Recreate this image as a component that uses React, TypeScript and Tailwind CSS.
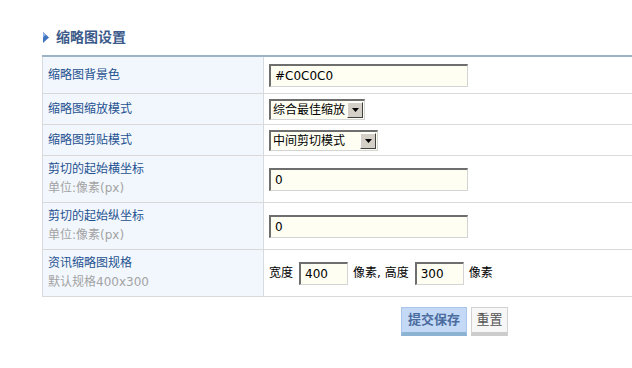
import React from "react";

const F = { fontFamily: '"DejaVu Sans", "Noto Sans CJK SC", sans-serif' };

function TextInput({ value, w }: { value: string; w: string }) {
  return (
    <div
      className={`${w} h-[23px] bg-[#fefef2] border-t-2 border-l-2 border-t-[#6e6e6e] border-l-[#6e6e6e] border-b border-r border-b-[#d4d4d4] border-r-[#d4d4d4] flex items-center pl-[4px] text-[12px] text-black leading-none`}
    >
      {value}
    </div>
  );
}

function Select({ value, w }: { value: string; w: string }) {
  return (
    <div
      className={`${w} h-[21px] bg-[#fefef2] border-t-2 border-l-2 border-t-[#6e6e6e] border-l-[#6e6e6e] border-b border-r border-b-[#d4d4d4] border-r-[#d4d4d4] flex items-center justify-between pl-[2px] pr-[1px] text-[12px] text-black leading-none`}
    >
      <span>{value}</span>
      <div className="w-[16px] h-[16px] bg-[#d4d0c8] border border-t-white border-l-white border-b-[#404040] border-r-[#404040] flex items-center justify-center">
        <svg width="7" height="4" viewBox="0 0 7 4">
          <polygon points="0,0 7,0 3.5,4" fill="#000" />
        </svg>
      </div>
    </div>
  );
}

function Row({
  h,
  label,
  sub,
  children,
}: {
  h: string;
  label: string;
  sub?: string;
  children: React.ReactNode;
}) {
  return (
    <div className={`flex ${h} border-b border-[#d9d9d9]`}>
      <div className="w-[222px] shrink-0 bg-[#f2f7fd] border-l border-r border-l-[#d6d9dd] border-r-[#d6dbe0] pl-[5px] flex flex-col justify-center text-[12px] leading-[19px]">
        <div className="text-[#1f5291]">{label}</div>
        {sub && <div className="text-[#a3a3a3]">{sub}</div>}
      </div>
      <div className="flex-1 pl-[5px] flex items-center">{children}</div>
    </div>
  );
}

export default function App() {
  return (
    <div className="w-[632px] h-[368px] bg-white overflow-hidden" style={F}>
      <div className="flex items-center h-[20px] mt-[27px] pl-[43px] gap-[7px]">
        <svg width="6" height="11" viewBox="0 0 6 11">
          <polygon points="0,0 6,5.5 0,11" fill="#3f73bf" />
          <polygon points="0,0 3,2.75 0,5.5" fill="#8fb2e6" />
        </svg>
        <span className="text-[14px] font-bold text-[#3b5a8a] leading-none">缩略图设置</span>
      </div>
      <div className="ml-[42px] mt-[8px] border-t-2 border-[#9cb4c6]">
        <Row h="h-[37px]" label="缩略图背景色">
          <TextInput value="#C0C0C0" w="w-[199px]" />
        </Row>
        <Row h="h-[31px]" label="缩略图缩放模式">
          <Select value="综合最佳缩放" w="w-[96px]" />
        </Row>
        <Row h="h-[31px]" label="缩略图剪贴模式">
          <Select value="中间剪切模式" w="w-[109px]" />
        </Row>
        <Row h="h-[47px]" label="剪切的起始横坐标" sub="单位:像素(px)">
          <TextInput value="0" w="w-[199px]" />
        </Row>
        <Row h="h-[47px]" label="剪切的起始纵坐标" sub="单位:像素(px)">
          <TextInput value="0" w="w-[199px]" />
        </Row>
        <Row h="h-[47px]" label="资讯缩略图规格" sub="默认规格400x300">
          <div className="flex items-center text-[12px] text-black">
            <span className="mr-[6px]">宽度</span>
            <TextInput value="400" w="w-[49px]" />
            <span className="ml-[5px] mr-[6px]">像素, 高度</span>
            <TextInput value="300" w="w-[49px]" />
            <span className="ml-[5px]">像素</span>
          </div>
        </Row>
      </div>
      <div className="flex gap-[4px] mt-[10px] pl-[401px]">
        <div className="w-[66px] h-[29px] bg-[#c3d9f6] border border-[#a9c6ea] border-b-4 border-b-[#8db3d2] flex items-center justify-center text-[13px] font-bold text-[#4b6c9e]">
          提交保存
        </div>
        <div className="w-[37px] h-[29px] bg-[#f7f7f7] border border-[#d2d2d2] border-b-4 border-b-[#cccccc] flex items-center justify-center text-[13px] text-[#555]">
          重置
        </div>
      </div>
    </div>
  );
}
